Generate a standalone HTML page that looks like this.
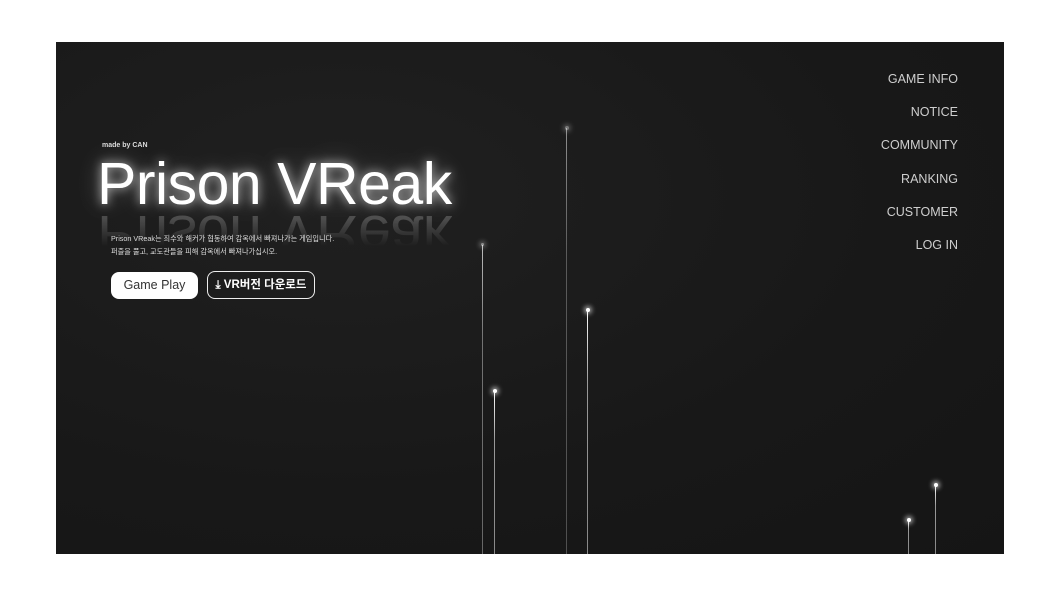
<!DOCTYPE html>
<html><head><meta charset="utf-8"><style>
html,body{margin:0;padding:0;background:#fff;width:1061px;height:597px;overflow:hidden}
.box{position:absolute;left:56px;top:42px;width:948px;height:512px;background:radial-gradient(ellipse at 30% 30%,#202020,#181818 60%,#151515);overflow:hidden;font-family:"Liberation Sans","Noto Sans CJK KR",sans-serif}
.nav{position:absolute;right:46px;top:21px;text-align:right;color:#cfcfcf;font-size:12.5px;line-height:33.2px}
.made{position:absolute;left:46px;top:100px;color:#ddd;font-size:7px;font-weight:bold}
.title{position:absolute;left:41px;top:108px;color:#fff;font-size:59px;line-height:68px;white-space:nowrap;letter-spacing:-0.5px;text-shadow:0 0 10px rgba(255,255,255,.7),0 0 24px rgba(255,255,255,.35)}
.refl{position:absolute;left:41px;top:160px;color:#fff;font-size:59px;line-height:68px;white-space:nowrap;letter-spacing:-0.5px;transform:scaleY(-1);opacity:.2;-webkit-mask-image:linear-gradient(to top,#000 25%,transparent 65%)}
.desc{position:absolute;left:55px;top:191px;color:#ddd;font-size:7.2px;line-height:12.5px}
.btn1{position:absolute;left:55px;top:230px;width:87px;height:27px;border-radius:8px;background:#fff;color:#333;font-size:12.5px;line-height:27px;text-align:center}
.btn2{position:absolute;left:151px;top:229px;width:106px;height:26px;border-radius:8px;border:1.5px solid #eee;color:#fff;font-size:11.5px;line-height:26px;text-align:center;font-weight:bold}
.l{position:absolute;width:1px;background:linear-gradient(#fff,#999 30%,#888)}
.d{position:absolute;width:4px;height:4px;border-radius:50%;background:#fff;box-shadow:0 0 5px 2px rgba(255,255,255,.6);margin-left:-1.5px;margin-top:-2px}
</style></head><body><div class="box">
<div class="nav">GAME INFO<br>NOTICE<br>COMMUNITY<br>RANKING<br>CUSTOMER<br>LOG IN</div>
<div class="made">made by CAN</div>
<div class="refl">Prison VReak</div>
<div class="title">Prison VReak</div>
<div class="desc">Prison VReak는 죄수와 해커가 협동하여 감옥에서 빠져나가는 게임입니다.<br>퍼즐을 풀고, 교도관들을 피해 감옥에서 빠져나가십시오.</div>
<div class="btn1">Game Play</div>
<div class="btn2">⤓ VR버전 다운로드</div>
<div class="l" style="left:510px;top:86px;height:426px;opacity:.5"></div><div class="d" style="left:510px;top:86px;opacity:.4"></div>
<div class="l" style="left:426px;top:203px;height:309px;opacity:.7"></div><div class="d" style="left:426px;top:203px;opacity:.5;width:3px;height:3px"></div>
<div class="l" style="left:438px;top:349px;height:163px"></div><div class="d" style="left:438px;top:349px"></div>
<div class="l" style="left:531px;top:268px;height:244px"></div><div class="d" style="left:531px;top:268px"></div>
<div class="l" style="left:852px;top:478px;height:34px"></div><div class="d" style="left:852px;top:478px"></div>
<div class="l" style="left:879px;top:443px;height:69px"></div><div class="d" style="left:879px;top:443px"></div>
</div></body></html>
